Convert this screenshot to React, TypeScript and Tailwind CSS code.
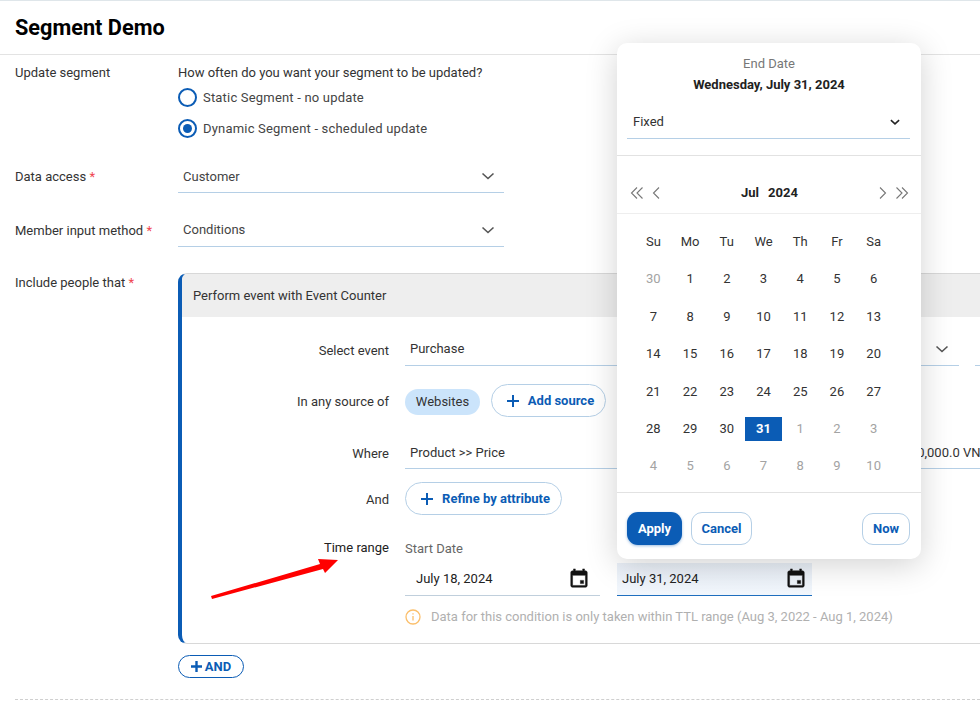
import React from "react";

const Chevron = ({ c = "#555", w = 1.6, s = 16 }: { c?: string; w?: number; s?: number }) => (
  <svg width={s} height={s} viewBox="0 0 16 16" fill="none" stroke={c} strokeWidth={w}>
    <path d="M2.5 5.5 8 10.5l5.5-5" />
  </svg>
);

const Plus = ({ s = 12, w = 2 }: { s?: number; w?: number }) => (
  <svg width={s} height={s} viewBox="0 0 12 12" stroke="#0b5cb5" strokeWidth={w}>
    <path d="M6 0v12M0 6h12" />
  </svg>
);

const EventIcon = () => (
  <svg width="22" height="22" viewBox="0 0 24 24" fill="#111" stroke="#111" strokeWidth="0.5">
    <path d="M17 13.500h-3.500V17H17v-3.500zM16 1v2H8V1H6v2H5c-1.110 0-1.990.9-1.990 2L3 19c0 1.100.89 2 2 2h14c1.100 0 2-.9 2-2V5c0-1.100-.9-2-2-2h-1V1h-2zm3 18H5V8h14v11z" />
  </svg>
);

const Radio = ({ on, label }: { on?: boolean; label: string }) => (
  <div className="flex items-center h-[19px] gap-[6px]">
    <span className="w-[19px] h-[19px] rounded-full border-2 border-[#0b5cb5] flex items-center justify-center shrink-0">
      {on && <span className="w-[9px] h-[9px] rounded-full bg-[#0b5cb5]" />}
    </span>
    <span className="text-[#444] tracking-[0.19px]">{label}</span>
  </div>
);

const Select = ({ value, textClass }: { value: string; textClass?: string }) => (
  <div className="w-[326px] h-[33px] border-b border-[#b5cfe6] flex items-center justify-between pl-[5px] pr-[8px] text-[#444]">
    <span className={textClass}>{value}</span>
    <Chevron />
  </div>
);

const Req = () => <span className="text-[#f0464f]"> *</span>;

const Row = ({ label, className, children }: { label: React.ReactNode; className?: string; children?: React.ReactNode }) => (
  <div className={"flex pl-[15px] " + (className ?? "")}>
    <div className="w-[163px] shrink-0 text-[#333]">{label}</div>
    <div className="flex-1 min-w-0">{children}</div>
  </div>
);

const FormRow = ({ label, h, children }: { label: string; h: string; children: React.ReactNode }) => (
  <div className={"flex items-center gap-[16px] " + h}>
    <div className="w-[207px] shrink-0 text-right text-[#333]">{label}</div>
    <div className="flex-1 min-w-0 flex items-center">{children}</div>
  </div>
);

const Outline = ({ children, className }: { children: React.ReactNode; className?: string }) => (
  <div className={"flex items-center justify-center rounded-full border border-[#b5cfe6] text-[#0b5cb5] font-bold bg-white " + (className ?? "")}>
    {children}
  </div>
);

const weeks = [
  [30, 1, 2, 3, 4, 5, 6],
  [7, 8, 9, 10, 11, 12, 13],
  [14, 15, 16, 17, 18, 19, 20],
  [21, 22, 23, 24, 25, 26, 27],
  [28, 29, 30, 31, 1, 2, 3],
  [4, 5, 6, 7, 8, 9, 10],
];

const Calendar = () => (
  <div className="absolute left-[617px] top-[42px] w-[304px] h-[516px] bg-white rounded-[10px] shadow-[0_6px_32px_rgba(0,0,0,0.18)] flex flex-col">
    <div className="text-center text-[#777] leading-[16px] pt-[13px]">End Date</div>
    <div className="text-center font-bold text-[#222] leading-[16px] mt-[5px]">Wednesday, July 31, 2024</div>
    <div className="ml-[10px] mr-[11px] mt-[12px] h-[34px] border-b border-[#b5cfe6] flex items-center justify-between pl-[6px] pr-[9px] text-[#333]">
      <span>Fixed</span>
      <Chevron c="#222" s={12} w={2} />
    </div>
    <div className="h-[17px] border-b border-[#e2e2e2]" />
    <div className="h-[58px] border-b border-[#eee] flex items-center justify-between pl-[13px] pr-[12px] pt-[16px]">
      <div className="flex items-center gap-[8px]">
        <svg width="14" height="14" viewBox="0 0 14 14" fill="none" stroke="#777" strokeWidth="1.1"><path d="M7 1.500 1.500 7 7 12.500M12.500 1.500 7 7l5.500 5.500" /></svg>
        <svg width="8" height="14" viewBox="0 0 8 14" fill="none" stroke="#777" strokeWidth="1.1"><path d="M7 1.500 1.500 7 7 12.500" /></svg>
      </div>
      <div className="font-bold text-[#222]">Jul<span className="ml-[9px]">2024</span></div>
      <div className="flex items-center gap-[8px]">
        <svg width="8" height="14" viewBox="0 0 8 14" fill="none" stroke="#777" strokeWidth="1.1"><path d="M1 1.500 6.500 7 1 12.500" /></svg>
        <svg width="14" height="14" viewBox="0 0 14 14" fill="none" stroke="#777" strokeWidth="1.1"><path d="M1.500 1.500 7 7l-5.500 5.500M7 1.500 12.500 7 7 12.500" /></svg>
      </div>
    </div>
    <div className="ml-[18px] mr-[29px] mt-[9px] grid grid-cols-7 auto-rows-[37.4px] text-center">
      {["Su", "Mo", "Tu", "We", "Th", "Fr", "Sa"].map((d) => (
        <div key={d} className="flex items-center justify-center text-[#333]">{d}</div>
      ))}
      {weeks.map((w, i) =>
        w.map((d, j) => {
          const muted = (i === 0 && d === 30) || (i === 4 && d < 10) || i === 5;
          const sel = i === 4 && d === 31;
          return (
            <div key={i + "-" + j} className="flex items-center justify-center">
              {sel ? (
                <span className="shrink-0 w-[37px] h-[24px] bg-[#0b5cb5] text-white font-bold flex items-center justify-center">{d}</span>
              ) : (
                <span className={muted ? "text-[#a3a3a3]" : "text-[#333]"}>{d}</span>
              )}
            </div>
          );
        })
      )}
    </div>
    <div className="mt-[7px] border-t border-[#e2e2e2] flex items-start pl-[10px] pr-[11px] pt-[19px]">
      <div className="w-[55px] h-[33px] pt-[1px] rounded-[11px] bg-[#0b5cb5] text-white font-bold flex items-center justify-center shadow-[0_1px_3px_rgba(11,92,181,0.4)]">Apply</div>
      <div className="ml-[9px] w-[61px] h-[33px] pt-[1px] rounded-[11px] border border-[#b5cfe6] text-[#0b5cb5] font-bold flex items-center justify-center">Cancel</div>
      <div className="ml-auto mt-[1px] w-[48px] h-[32px] rounded-[11px] border border-[#b5cfe6] text-[#0b5cb5] font-bold flex items-center justify-center">Now</div>
    </div>
  </div>
);

export default function App() {
  return (
    <div className="relative w-[980px] h-[705px] overflow-hidden bg-white text-[13px] text-[#222] font-['Roboto',sans-serif] border-t border-[#dfe6ea]">
      <div className="h-[54px] border-b border-[#e3e3e3] flex items-center pl-[15px]">
        <h1 className="text-[21.7px] font-bold text-black pt-[1px]">Segment Demo</h1>
      </div>

      <Row label="Update segment" className="pt-[9px] leading-[18px] h-[104px]">
        <div className="text-[#333]">How often do you want your segment to be updated?</div>
        <div className="mt-[6px] flex flex-col gap-[12px]">
          <Radio label="Static Segment - no update" />
          <Radio on label="Dynamic Segment - scheduled update" />
        </div>
      </Row>

      <Row label={<span className="block mt-[9px]">Data access<Req /></span>} className="h-[54px] leading-[18px]">
        <div className="pt-[1px]"><Select value="Customer" textClass="mt-[2px]" /></div>
      </Row>

      <Row label={<span className="block mt-[9px]">Member input method<Req /></span>} className="h-[54px] leading-[18px]">
        <div className="pt-[1px]"><Select value="Conditions" /></div>
      </Row>

      <Row label={<span className="block mt-[1px]">Include people that<Req /></span>} className="pt-[6px] leading-[18px]">
        <div className="w-[900px] border-t border-b border-[#d8d8d8] border-l-[4px] border-l-[#0b5cb5] rounded-l-[9px] h-[371px]">
          <div className="h-[43px] bg-[#eeeeee] flex items-center pl-[11px] text-[#333] rounded-tl-[5px]">Perform event with Event Counter</div>
          <FormRow label="Select event" h="h-[67px]">
            <div className="w-[554px] h-[33px] mt-[-3px] border-b border-[#b5cfe6] flex items-center justify-between pl-[5px] pr-[9px] text-[#333]">
              <span>Purchase</span>
              <Chevron />
            </div>
            <div className="ml-[16px] w-[40px] h-[33px] mt-[-3px] border-b border-[#b5cfe6]" />
          </FormRow>
          <FormRow label="In any source of" h="h-[34px] mt-[1px]">
            <div className="w-[75px] h-[26px] -mt-[1px] rounded-full bg-[#cbe4fb] text-[#333] flex items-center justify-center">Websites</div>
            <Outline className="ml-[11px] w-[115px] h-[33px] -mt-[3px] gap-[9px] pl-[4px]"><Plus />Add source</Outline>
          </FormRow>
          <FormRow label="Where" h="h-[70px]">
            <div className="w-[575px] h-[32px] -mt-[2px] border-b border-[#b5cfe6] flex items-center justify-between pl-[5px] text-[#333]">
              <span>Product &gt;&gt; Price</span>
              <span className="whitespace-nowrap -mr-[9px]">100,000.0 VND</span>
            </div>
          </FormRow>
          <FormRow label="And" h="h-[33px] -mt-[6px]">
            <Outline className="w-[157px] h-[33px] -mt-[2px] gap-[9px] pl-[4px]"><Plus />Refine by attribute</Outline>
          </FormRow>
          <div className="flex gap-[16px] mt-[23px]">
            <div className="w-[207px] shrink-0 text-right text-[#222]">Time range</div>
            <div className="flex-1 min-w-0">
              <div className="text-[#666] mt-[1px]">Start Date</div>
              <div className="flex gap-[17px] mt-[5px]">
                <div className="w-[195px] h-[33px] border-b border-[#c0cfdc] flex items-center justify-between pl-[11px] pr-[10px] text-[#222]">July 18, 2024<EventIcon /></div>
                <div className="w-[195px] h-[33px] border-b border-[#1f6fbf] bg-gradient-to-b from-[#eaf0f8] to-[#f2f7fd] flex items-center justify-between pl-[5px] pr-[5px] text-[#222]">July 31, 2024<EventIcon /></div>
              </div>
              <div className="flex items-center gap-[10px] mt-[12px] text-[#b0b0b0]">
                <svg width="16" height="16" viewBox="0 0 16 16" fill="none" stroke="#fbbf6b" strokeWidth="1.3">
                  <circle cx="8" cy="8" r="7" />
                  <path d="M8 7v4.500M8 4.200v1.300" />
                </svg>
                Data for this condition is only taken within TTL range (Aug 3, 2022 - Aug 1, 2024)
              </div>
            </div>
          </div>
        </div>
        <div className="mt-[11px] w-[66px] h-[23px] rounded-full border border-[#0b5cb5] text-[#0b5cb5] font-bold flex items-center justify-center gap-[3px] leading-none">
          <Plus s={11} w={2.6} />AND
        </div>
      </Row>

      <div className="ml-[15px] mt-[21px] border-t border-dashed border-[#cfcfcf]" />

      <svg className="absolute left-[205px] top-[550px]" width="140" height="52" viewBox="0 0 140 52" fill="#ff0000">
        <path d="M6 45 115 13 113 8 133 9 120 22 118 18 7 48Z" />
      </svg>

      <Calendar />
    </div>
  );
}
